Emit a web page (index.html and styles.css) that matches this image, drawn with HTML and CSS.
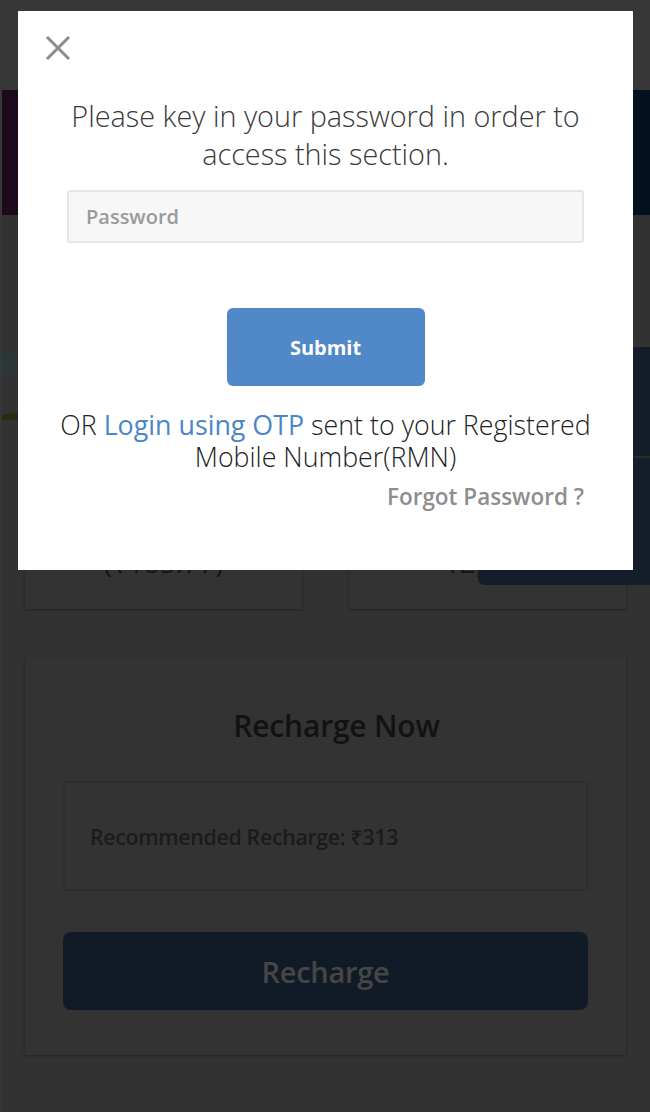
FILE: index.html
```html
<!DOCTYPE html>
<html lang="en">
<head>
<meta charset="utf-8">
<title>Password</title>
<link rel="stylesheet" href="styles.css">
</head>
<body>
<div class="page">
  <header class="topbar"></header>
  <div class="band"></div>
  <div class="hero">
    <svg class="hero-art" width="650" height="205" viewBox="0 0 650 205">
      <ellipse cx="4" cy="150" rx="16" ry="12" fill="#2b3636"/>
      <path d="M0 200 L22 196 L22 205 L0 205 Z" fill="#2a2c0c"/>
    </svg>
  </div>
  <div class="stats">
    <div class="stat-card"><span class="stat-value">(₹185.77)</span></div>
    <div class="stat-card"><span class="stat-value">12,500</span></div>
  </div>
  <section class="recharge-card">
    <h2 class="recharge-title">Recharge Now</h2>
    <div class="recommend">Recommended Recharge: ₹313</div>
    <button class="recharge-btn">Recharge</button>
  </section>

  <aside class="side-panel">
    <div class="side-top"></div>
    <div class="side-bottom"></div>
    <div class="side-btn"></div>
  </aside>
</div>

<div class="modal">
  <button class="close" aria-label="Close">
    <svg width="26" height="26" viewBox="0 0 26 26"><path d="M2 2 L24 24 M24 2 L2 24" stroke="#8a8a8a" stroke-width="3" fill="none"/></svg>
  </button>
  <p class="modal-title">Please key in your password in order to access this section.</p>
  <div class="field">Password</div>
  <div class="actions"><button class="submit">Submit</button></div>
  <p class="otp">OR <span class="otp-link">Login using OTP</span> sent to your Registered Mobile Number(RMN)</p>
  <div class="forgot-row"><span class="forgot">Forgot Password ?</span></div>
</div>
</body>
</html>
```

FILE: styles.css
```css
* { box-sizing: border-box; }
html, body { margin: 0; padding: 0; }
body {
  width: 650px;
  height: 1112px;
  overflow: hidden;
  background: #323232;
  font-family: "Open Sans", "Noto Sans", "DejaVu Sans", sans-serif;
  position: relative;
}
.page {
  display: flex;
  flex-direction: column;
  height: 1112px;
  border-left: 2px solid #373737;
}
.topbar { height: 90px; background: #373737; flex: none; }
.band {
  height: 125px;
  flex: none;
  background: linear-gradient(90deg, #1d0a1c 0%, #130b1e 50%, #04101e 100%);
}
.hero { height: 205px; flex: none; }
.hero-art { display: block; }
.stats {
  display: grid;
  grid-template-columns: 277px 277px;
  gap: 47px;
  padding: 0 0 0 23px;
  height: 189px;
  flex: none;
}
.stat-card {
  background: #333333;
  box-shadow: 0 1px 3px rgba(0,0,0,0.3);
  display: flex;
  justify-content: center;
  align-items: flex-end;
  padding-bottom: 30px;
}
.stat-value { font-size: 28px; color: #151515; line-height: 34px; }
.recharge-card {
  margin: 48px 0 0 23px;
  width: 601px;
  height: 398px;
  background: #333333;
  box-shadow: 0 1px 3px rgba(0,0,0,0.3);
  padding: 51px 38px 0 38px;
  display: flex;
  flex-direction: column;
}
.recharge-title {
  margin: 0;
  padding-left: 22px;
  text-align: center;
  font-size: 30px;
  font-weight: 600;
  line-height: 36px;
  color: #121212;
  letter-spacing: -0.2px;
}
.recommend {
  margin-top: 37px;
  height: 110px;
  border: 2px solid #2f2f2f;
  display: flex;
  align-items: center;
  padding-left: 25px;
  font-size: 21.3px;
  font-weight: 600;
  color: #1b1b1b;
  letter-spacing: -0.3px;
}
.recharge-btn {
  margin-top: 41px;
  height: 78px;
  border: none;
  border-radius: 8px;
  background: #111b27;
  color: #464646;
  font-family: inherit;
  font-size: 29px;
  font-weight: 600;
  letter-spacing: -0.3px;
}
.side-panel {
  position: absolute;
  top: 347px;
  left: 478px;
  width: 172px;
  height: 238px;
  display: flex;
  flex-direction: column;
}
.side-top { height: 111px; background: #141c28; border-bottom: 2px solid #2a2a2a; }
.side-bottom { flex: 1; background: #131e2a; }
.side-btn {
  height: 40px;
  background: #131e2a;
  border-radius: 0 0 0 6px;
}

.modal {
  position: absolute;
  top: 11px;
  left: 18px;
  width: 615px;
  height: 559px;
  background: #ffffff;
  padding: 24px 49px 0 49px;
  display: flex;
  flex-direction: column;
}
.close {
  align-self: flex-start;
  margin-left: -22px;
  width: 26px;
  height: 25px;
  padding: 0;
  border: none;
  background: none;
  display: block;
}
.close svg { display: block; }
.modal-title {
  margin: 37px 0 0 0;
  text-align: center;
  font-size: 28.8px;
  line-height: 38px;
  color: #3a3a3a;
  font-weight: 300;
}
.field {
  margin-top: 17px;
  height: 53px;
  background: #f7f7f7;
  border: 2px solid #e6e6e6;
  border-radius: 3px;
  display: flex;
  align-items: center;
  padding-left: 17px;
  font-size: 20px;
  font-weight: 600;
  color: #9a9a9a;
}
.actions { display: flex; justify-content: center; margin-top: 65px; }
.submit {
  width: 198px;
  height: 78px;
  border: none;
  border-radius: 6px;
  background: #5088c8;
  color: #ffffff;
  font-family: inherit;
  font-size: 20px;
  font-weight: 700;
}
.otp {
  margin: 23px -12px 0 -12px;
  text-align: center;
  font-size: 26.8px;
  line-height: 32px;
  color: #222222;
  font-weight: 300;
}
.otp-link { color: #4a86c8; font-weight: 400; }
.forgot-row { margin-top: 12px; display: flex; justify-content: flex-end; }
.forgot {
  font-size: 22.5px;
  font-weight: 600;
  line-height: 24px;
  color: #8e8e8e;
}
```
